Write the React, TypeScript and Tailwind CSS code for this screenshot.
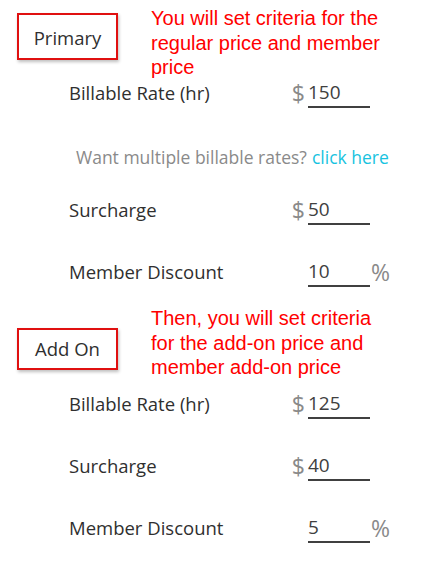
import React from 'react';

type Row = { label: string; value: string; unit: '$' | '%' };

const sans = "font-['Open_Sans','Noto_Sans',sans-serif]";

function FieldRow({ label, value, unit, className = '' }: Row & { className?: string }) {
  return (
    <div className={`flex h-[40px] items-center pl-[69px] ${className}`}>
      <span className="w-[220px] text-[18.5px] text-[#2f2f2f]">{label}</span>
      <span className="w-[16px] text-right text-[23px] leading-none text-[#8a8a8a]">
        {unit === '$' ? '$' : ''}
      </span>
      <span className="ml-[3px] flex h-[30px] w-[62px] items-center border-b-2 border-[#404040] text-[19px] leading-none text-[#404040]">
        {value}
      </span>
      {unit === '%' && (
        <span className="ml-[1px] text-[23px] leading-none text-[#8a8a8a]">%</span>
      )}
    </div>
  );
}

function SectionTag({ title, className = '' }: { title: string; className?: string }) {
  return (
    <div
      className={`ml-[17px] flex w-[101px] items-center justify-center border-2 border-[#e01010] bg-white text-[18.5px] text-[#2f2f2f] shadow-[1px_2px_3px_rgba(0,0,0,0.25)] ${className}`}
    >
      {title}
    </div>
  );
}

function Note({ children, className = '' }: { children: React.ReactNode; className?: string }) {
  return (
    <p
      className={`absolute left-[151px] w-[240px] font-['Liberation_Sans',Arial,sans-serif] text-[20px] leading-[24.5px] text-[#ff0000] ${className}`}
    >
      {children}
    </p>
  );
}

export default function App() {
  return (
    <div className={`relative h-[570px] w-[438px] overflow-hidden bg-white ${sans}`}>
      <Note className="top-[6px]">You will set criteria for the regular price and member price</Note>
      <Note className="top-[306px]">Then, you will set criteria for the add-on price and member add-on price</Note>

      <div className="pt-[13px]">
        <SectionTag title="Primary" className="h-[47px] pt-[3px]" />
        <FieldRow label="Billable Rate (hr)" value="150" unit="$" className="mt-[13px]" />
        <div className="mt-[24px] flex h-[40px] items-center pl-[76px] text-[17.5px]">
          <span className="text-[#8a8a8a]">Want multiple billable rates?</span>
          <span className="ml-[5px] text-[#17c3e0]">click here</span>
        </div>
        <FieldRow label="Surcharge" value="50" unit="$" className="mt-[13px]" />
        <FieldRow label="Member Discount" value="10" unit="%" className="mt-[22px]" />
      </div>

      <div className="pt-[36px]">
        <SectionTag title="Add On" className="h-[42px]" />
        <FieldRow label="Billable Rate (hr)" value="125" unit="$" className="mt-[14px]" />
        <FieldRow label="Surcharge" value="40" unit="$" className="mt-[22px]" />
        <FieldRow label="Member Discount" value="5" unit="%" className="mt-[22px]" />
      </div>
    </div>
  );
}
